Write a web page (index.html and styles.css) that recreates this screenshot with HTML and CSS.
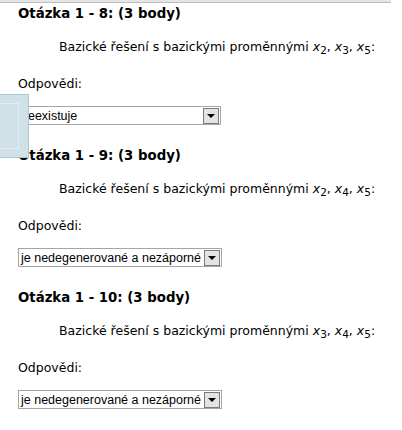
FILE: index.html
```html
<!DOCTYPE html>
<html lang="cs">
<head>
<meta charset="utf-8">
<title>Otázky</title>
<link rel="stylesheet" href="styles.css">
</head>
<body>
<div class="topbar"></div>
<div class="page">
  <div class="question">
    <h3 class="qhead">Otázka 1 - 8: (3 body)</h3>
    <p class="task">Bazické řešení s bazickými proměnnými <i>x</i><sub>2</sub>, <i>x</i><sub>3</sub>, <i>x</i><sub>5</sub>:</p>
    <p class="label">Odpovědi:</p>
    <div class="select"><span class="val">neexistuje</span><span class="btn"><span class="tri"></span></span></div>
  </div>
  <div class="question">
    <h3 class="qhead">Otázka 1 - 9: (3 body)</h3>
    <p class="task">Bazické řešení s bazickými proměnnými <i>x</i><sub>2</sub>, <i>x</i><sub>4</sub>, <i>x</i><sub>5</sub>:</p>
    <p class="label">Odpovědi:</p>
    <div class="select short"><span class="val">je nedegenerované a nezáporné</span><span class="btn"><span class="tri"></span></span></div>
  </div>
  <div class="question">
    <h3 class="qhead">Otázka 1 - 10: (3 body)</h3>
    <p class="task">Bazické řešení s bazickými proměnnými <i>x</i><sub>3</sub>, <i>x</i><sub>4</sub>, <i>x</i><sub>5</sub>:</p>
    <p class="label">Odpovědi:</p>
    <div class="select short"><span class="val">je nedegenerované a nezáporné</span><span class="btn"><span class="tri"></span></span></div>
  </div>
</div>
<div class="overlay"><div class="overlay-inner"></div></div>
</body>
</html>
```
FILE: styles.css
```css
html, body {
  margin: 0;
  padding: 0;
  background: #ffffff;
}
body {
  font-family: "DejaVu Sans", Verdana, sans-serif;
  color: #000;
  position: relative;
}
.topbar {
  width: 391px;
  height: 2px;
  background: #e6e6e6;
  border-bottom: 1px solid #bdbdbd;
}
.page {
  padding-left: 18px;
  padding-top: 2px;
}
.question {
  padding-bottom: 22px;
}
.qhead {
  margin: 0;
  font-size: 13.3px;
  line-height: 17px;
  font-weight: bold;
}
.task {
  margin: 17px 0 0 0;
  font-size: 12.5px;
  line-height: 16px;
  text-indent: 41px;
}
.task i {
  font-style: italic;
}
.task sub {
  font-size: 10.5px;
  vertical-align: -3px;
  line-height: 0;
}
.label {
  margin: 21px 0 0 0;
  font-size: 12.5px;
  line-height: 16px;
}
.select {
  margin-top: 14px;
  width: 201px;
  height: 17px;
  border: 1px solid #a5a5a5;
  display: flex;
  align-items: center;
  justify-content: space-between;
  font-family: "Liberation Sans", Arial, sans-serif;
  font-size: 12.5px;
  background: #fff;
}
.select.short {
  width: auto;
  display: inline-flex;
  vertical-align: top;
}
.val {
  padding-left: 2px;
  padding-right: 3px;
  white-space: nowrap;
}
.btn {
  width: 14px;
  height: 14px;
  margin-right: 1px;
  border: 1px solid #7a7a7a;
  background: #e3e3e3;
  display: flex;
  align-items: center;
  justify-content: center;
}
.tri {
  width: 0;
  height: 0;
  border-left: 4px solid transparent;
  border-right: 4px solid transparent;
  border-top: 4px solid #000;
  margin-top: 1px;
}
.overlay {
  position: absolute;
  left: 0;
  top: 94px;
  width: 28px;
  height: 62px;
  background: #d0e2e8;
  border: 1px solid #a9c9d2;
  border-left: none;
}
.overlay-inner {
  position: absolute;
  left: -1px;
  top: 8px;
  width: 18px;
  height: 44px;
  border: 1px solid #e4eef1;
}
```
